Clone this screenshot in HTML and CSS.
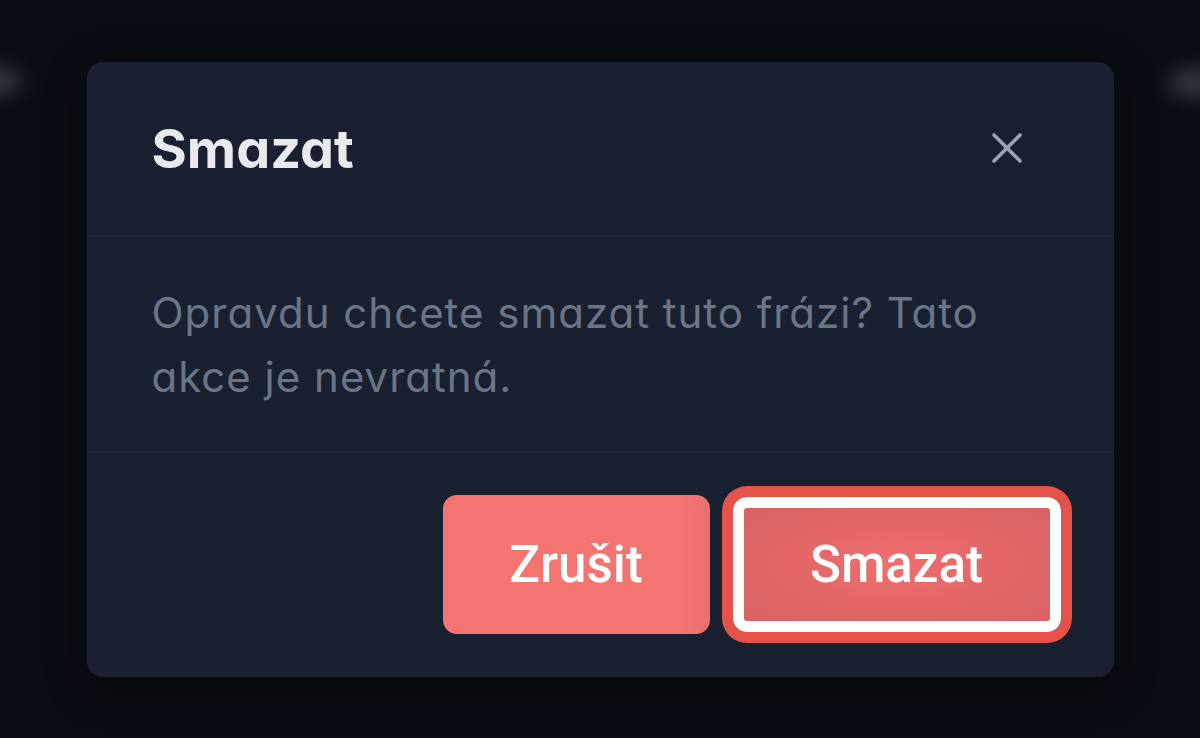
FILE: index.html
```html
<!DOCTYPE html>
<html lang="cs">
	<head>
		<meta charset="UTF-8">
		<title>Smazat</title>
		<link rel="stylesheet" href="styles.css">
	</head>
	<body>
		<div class="glow glow-left"></div>
		<div class="glow glow-right"></div>

		<div class="overlay">
			<div class="modal">
				<div class="modal-head">
					<h2 class="modal-title">Smazat</h2>
					<button class="close" type="button" aria-label="Zavřít">
						<svg width="32" height="32" viewBox="0 0 32 32" fill="none" stroke="#9ba4b3" stroke-width="3.6" stroke-linecap="round">
							<path d="M3 3 L29 29 M29 3 L3 29"/>
						</svg>
					</button>
				</div>
				<div class="modal-body">
					<p>Opravdu chcete smazat tuto frázi? Tato akce je nevratná.</p>
				</div>
				<div class="modal-foot">
					<button class="btn btn-cancel" type="button">Zrušit</button>
					<button class="btn btn-danger" type="button">Smazat</button>
				</div>
			</div>
		</div>
	</body>
</html>
```

FILE: styles.css
```css
html, body {
	margin: 0;
	height: 100%;
}

body {
	background: #0a0d13;
	font-family: Inter, "Noto Sans", sans-serif;
	font-feature-settings: "cv11" 1;
	overflow: hidden;
	position: relative;
}

/* blurred stuff behind the backdrop */
.glow {
	position: absolute;
	width: 60px;
	height: 26px;
	border-radius: 13px;
	background: #4a4d55;
	filter: blur(10px);
	opacity: .7;
}

.glow-left {
	left: -40px;
	top: 68px;
}

.glow-right {
	right: -30px;
	top: 70px;
}

.overlay {
	height: 100%;
	display: flex;
	align-items: center;
	justify-content: center;
	position: relative;
}

.modal {
	width: 1027px;
	background: #192130;
	border-radius: 16px;
	box-shadow: 0 10px 40px rgba(0, 0, 0, .45);
}

.modal-head {
	height: 173px;
	display: flex;
	align-items: center;
	justify-content: space-between;
	padding: 0 91px 0 65px;
	border-bottom: 1px solid #252d3c;
}

.modal-title {
	margin: 0;
	font-size: 54px;
	font-weight: 700;
	color: #e8eaee;
}

.close {
	background: none;
	border: 0;
	padding: 0;
	width: 32px;
	height: 32px;
	cursor: pointer;
}

.close svg {
	display: block;
}

.modal-body {
	padding: 45px 64px 42px 65px;
	border-bottom: 1px solid #252d3c;
}

.modal-body p {
	margin: 0;
	font-size: 42px;
	line-height: 64px;
	letter-spacing: 1px;
	color: #6b7586;
}

.modal-foot {
	height: 225px;
	display: flex;
	align-items: center;
	justify-content: flex-end;
	gap: 23px;
	padding: 0 53px 0 65px;
}

.btn {
	font-family: Roboto, "Liberation Sans", sans-serif;
	font-weight: 500;
	font-size: 51px;
	color: #fff;
	border: 0;
	cursor: pointer;
	box-sizing: border-box;
}

.btn-cancel {
	width: 267px;
	height: 139px;
	border-radius: 14px;
	background: linear-gradient(90deg, #f47472 88%, #ea706f);
}

.btn-danger {
	width: 328px;
	height: 135px;
	border: 11px solid #fff;
	border-radius: 14px;
	background: radial-gradient(ellipse at center, #f06e6e 0%, #e46767 45%, #d86262 100%);
	box-shadow: 0 0 0 11px #e5524a;
}
```
